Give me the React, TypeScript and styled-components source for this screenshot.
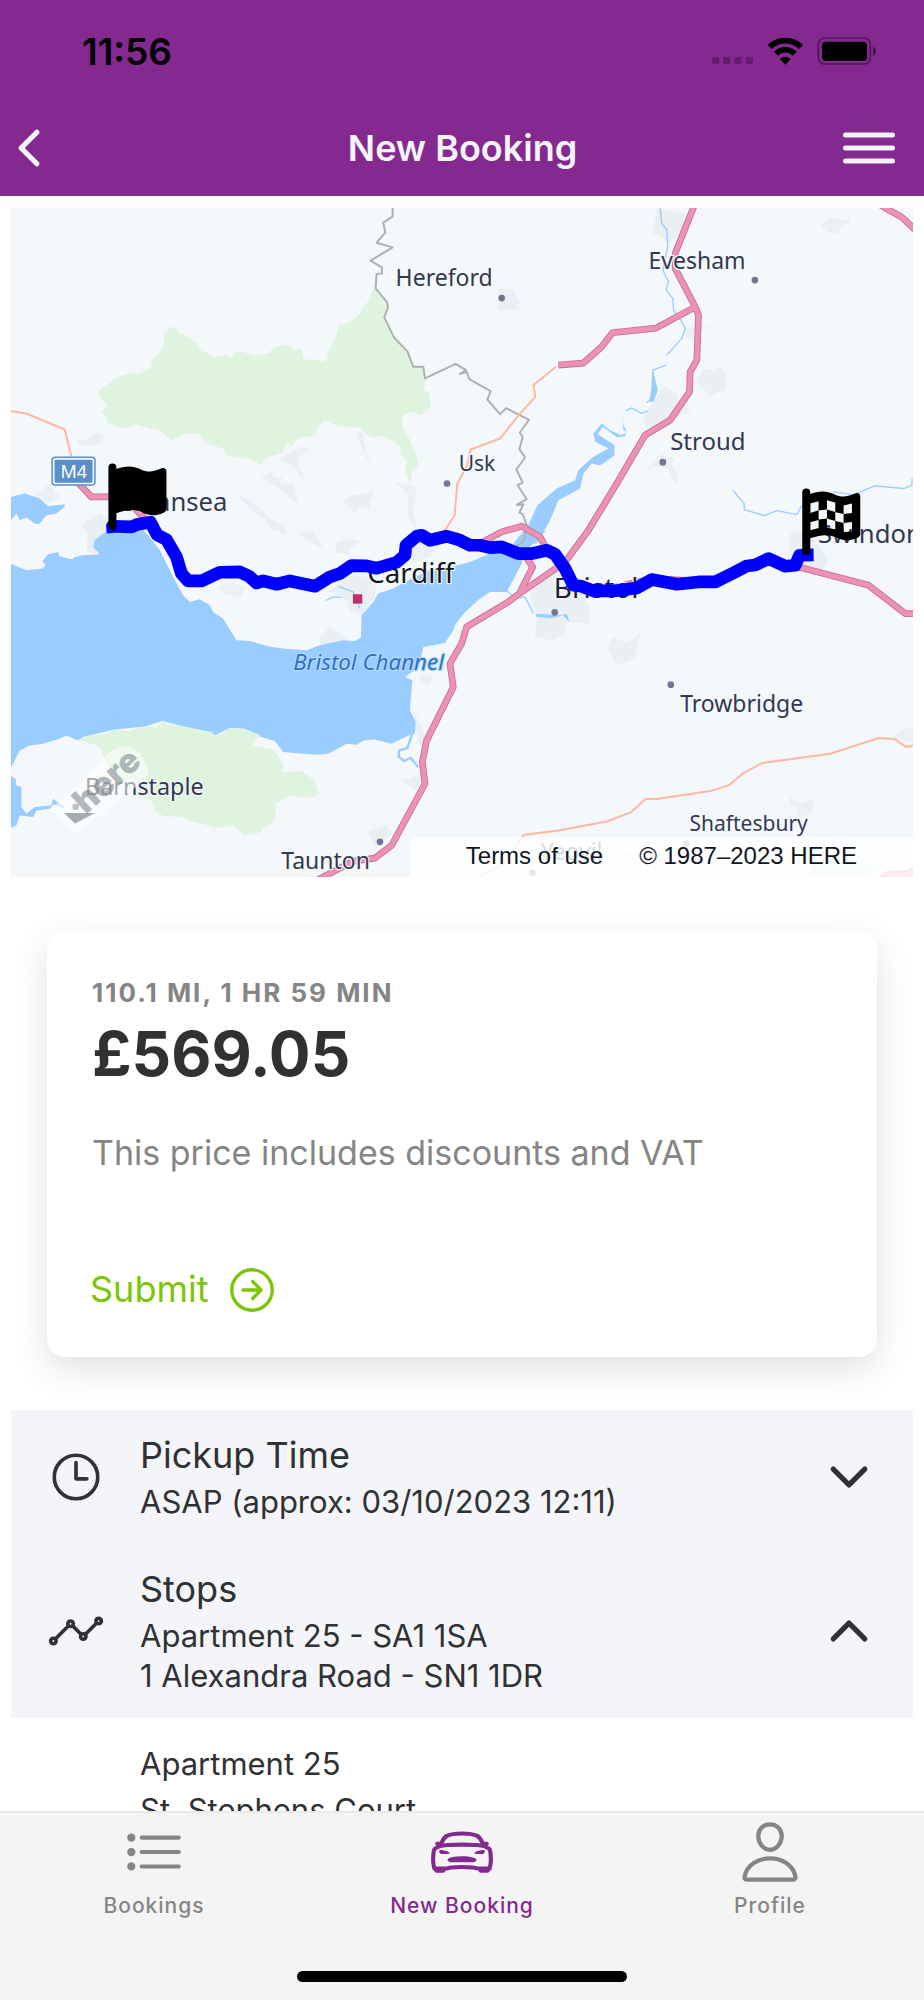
import React, { useState } from "react";
import styled, { createGlobalStyle } from "styled-components";
import {
  IoAnalyticsOutline,
  IoArrowForwardCircleOutline,
  IoCarSportOutline,
  IoChevronBack,
  IoChevronDown,
  IoChevronUp,
  IoListOutline,
  IoPersonOutline,
  IoTimeOutline,
} from "react-icons/io5";

const purple = "#83298f";
const ink = "#2f3133";
const grey = "#858585";

const GlobalStyle = createGlobalStyle`
  *, *::before, *::after { box-sizing: border-box; }
  body {
    margin: 0;
    background: #fff;
    color: ${ink};
    font-family: Inter, "Liberation Sans", sans-serif;
  }
  button { font: inherit; color: inherit; background: none; border: 0; padding: 0; cursor: pointer; }
  h1, h2, p { margin: 0; }
  svg { display: block; flex: none; }
`;

const Shell = styled.div`
  height: 100vh;
  display: flex;
  flex-direction: column;
`;

const Header = styled.header`
  flex: none;
  background: ${purple};
`;

const StatusBar = styled.div`
  display: flex;
  align-items: center;
  justify-content: space-between;
  height: 100px;
  padding: 2px 48px 0 82px;
  color: #000;
  font-size: 37px;
  font-weight: 600;
`;

const NavBar = styled.div`
  display: grid;
  grid-template-columns: 1fr auto 1fr;
  align-items: center;
  height: 96px;
  padding: 0 20px 0 1px;
  color: #f4f5fa;
`;

const Title = styled.h1`
  padding-left: 20px;
  font-size: 36px;
  font-weight: 600;
  line-height: 48px;
`;

const IconButton = styled.button<{ $end?: boolean }>`
  justify-self: ${(p) => (p.$end ? "end" : "start")};
`;

const Main = styled.main`
  flex: 1;
  min-height: 0;
  overflow-y: auto;
  scrollbar-width: none;
  padding: 12px 11px 0;
`;

const MapFrame = styled.section`
  position: relative;
  overflow: hidden;
`;

const MapDrawing = styled.svg`
  width: 100%;
  height: auto;
  font-family: "Noto Sans", sans-serif;
`;

const Attribution = styled.div`
  position: absolute;
  right: 0;
  bottom: 0;
  display: flex;
  align-items: center;
  gap: 36px;
  height: 40px;
  padding: 0 56px 2px;
  background: rgba(255, 255, 255, 0.82);
  color: #111522;
  font-family: "Liberation Sans", Arial, sans-serif;
  font-size: 24px;
  line-height: 32px;
  a { color: inherit; text-decoration: none; }
`;

const Card = styled.section`
  display: flex;
  flex-direction: column;
  align-items: flex-start;
  margin: 54px 36px 53px;
  padding: 44px 45px 40px;
  border-radius: 18px;
  background: #fff;
  box-shadow: 0 12px 36px rgba(0, 0, 0, 0.12);
`;

const Distance = styled.p`
  color: ${grey};
  font-size: 26px;
  font-weight: 700;
  letter-spacing: 2px;
  line-height: 36px;
  text-transform: uppercase;
`;

const Price = styled.h2`
  font-size: 62px;
  font-weight: 700;
  line-height: 86px;
`;

const PriceNote = styled.p`
  margin-top: 34px;
  color: ${grey};
  font-size: 34px;
  line-height: 44px;
`;

const Submit = styled.button`
  display: flex;
  align-items: center;
  gap: 17px;
  margin-top: 87px;
  margin-left: -2px;
  color: #7cc60a;
  font-size: 36px;
  line-height: 55px;
`;

const Row = styled.button`
  display: grid;
  grid-template-columns: 58px 1fr 56px;
  align-items: center;
  column-gap: 35px;
  width: 100%;
  padding: 22px 36px;
  background: #f4f5f9;
  color: ${ink};
  text-align: left;
`;

const RowTitle = styled.span`
  display: block;
  margin-bottom: 4px;
  font-size: 36px;
  line-height: 46px;
`;

const RowLine = styled.span`
  display: block;
  font-size: 31px;
  line-height: 40px;
`;

const RowText = styled.span`
  display: block;
`;

const StopDetails = styled.address`
  padding: 23px 0 0 129px;
  font-size: 31px;
  font-style: normal;
  line-height: 46px;
`;

const TabBar = styled.nav`
  flex: none;
  display: flex;
  flex-direction: column;
  align-items: center;
  justify-content: space-between;
  height: 189px;
  padding-bottom: 18px;
  border-top: 2px solid #e9e9e9;
  background: #f4f4f4;
`;

const Tabs = styled.div`
  display: grid;
  grid-template-columns: repeat(3, 1fr);
  width: 100%;
`;

const Tab = styled.a<{ $active?: boolean }>`
  display: flex;
  flex-direction: column;
  align-items: center;
  color: ${(p) => (p.$active ? purple : grey)};
  font-size: 21px;
  font-weight: 500;
  letter-spacing: 1px;
  line-height: 30px;
  text-decoration: none;
`;

const TabIcon = styled.span`
  display: grid;
  place-items: center;
  height: 78px;
`;

const HomeIndicator = styled.div`
  width: 330px;
  height: 11px;
  border-radius: 6px;
  background: #000;
`;

const StatusIcons = () => (
  <svg width="164" height="28" viewBox="36 48 492 84" aria-hidden="true">
    <g fill="#000" fillOpacity=".25">
      {[36, 69, 103, 137].map((x) => (
        <rect key={x} x={x} y="108" width="22" height="22" rx="6" />
      ))}
    </g>
    <g fill="none" stroke="#000" strokeWidth="17">
      <path d="M209 78 A67 67 0 0 1 303 78" />
      <path d="M228 98 A39 39 0 0 1 284 98" />
    </g>
    <path d="M240 114 Q256 100 272 114 L256 131Z" />
    <rect x="355" y="51" width="156" height="78" rx="20" fill="none" stroke="#000" strokeOpacity=".4" strokeWidth="5" />
    <rect x="366" y="62" width="135" height="58" rx="11" />
    <path d="M519 77 C531 81 531 101 519 105Z" fillOpacity=".45" />
  </svg>
);

const MenuIcon = () => (
  <svg width="70" height="70" viewBox="0 0 70 70" fill="none" stroke="currentColor" strokeWidth="5" strokeLinecap="round" aria-hidden="true">
    <path d="M11.500 22H58.500M11.500 35H58.500M11.500 48H58.500" />
  </svg>
);

const flagPole = "M66 67 a12 12 0 0 1 24 0 V243 a12 12 0 0 1 -24 0Z";
const flagCloth =
  "M88 72 C120 60 142 62 168 75 C192 84 206 76 226 69 Q240 67 240 80 V192 Q239 200 228 204 C206 213 188 212 168 202 C142 190 118 194 88 205Z";
const flagChecks =
  "M90 100 115 93V120L90 128Z M140 90 165 97V125L140 118Z M190 106 215 100V128L190 131Z M115 121 140 118V145L115 148Z M165 126 190 131V158L165 152Z M90 156 115 149V173L90 180Z M140 145 165 152V178L140 172Z M190 158 215 155V183L190 186Z";

const urban = [
  "M230 1320 260 1318 290 1295 318 1306 300 1332 240 1336Z",
  "M100 1488 155 1448 165 1470 180 1490 150 1508 110 1500Z",
  "M245 1575 300 1540 330 1560 330 1600 285 1630 290 1660 260 1655 265 1600Z",
  "M838 1372 905 1338 928 1350 895 1372 893 1390 915 1440 870 1390 845 1388Z",
  "M782 1430 815 1415 822 1432 852 1432 835 1445 855 1455 880 1450 897 1515 850 1475 830 1460Z",
  "M705 1478 750 1500 780 1525 815 1560 850 1575 865 1600 815 1590 800 1560 770 1545Z",
  "M1068 1300 1080 1290 1090 1305 1098 1360 1130 1422 1095 1365Z",
  "M1025 1500 1060 1485 1125 1478 1108 1505 1115 1530 1085 1518 1065 1540Z",
  "M1185 1445 1215 1455 1250 1460 1240 1520 1250 1590 1222 1545 1225 1485Z",
  "M895 1595 940 1592 970 1645 920 1622Z",
  "M1005 1630 1050 1615 1085 1625 1045 1645 1052 1662 1010 1658Z",
  "M655 1760 700 1745 740 1765 720 1790 670 1780Z",
  "M985 1770 1060 1725 1130 1735 1125 1790 1085 1840 1050 1835 1040 1800Z",
  "M955 1915 990 1880 1045 1915 1000 1940 970 1945Z",
  "M1240 1610 1330 1620 1290 1670 1230 1690Z",
  "M1262 2020 1300 2030 1285 2055 1262 2045Z",
  "M1240 2130 1265 2180 1280 2220 1262 2240 1245 2190Z",
  "M1098 2495 1160 2475 1175 2500 1130 2545Z",
  "M1210 2340 1270 2320 1250 2370Z",
  "M1975 625 2055 640 2045 700 2005 730 1980 705 1955 700Z",
  "M1490 866 1540 866 1550 890 1565 910 1540 912 1565 925 1500 932 1485 920 1505 905Z",
  "M2460 675 2490 655 2550 665 2520 680 2515 700 2480 695ZM2535 665 2550 650 2543 672Z",
  "M2055 985 2080 980 2130 980 2095 995 2080 1020 2060 1015Z",
  "M2085 1145 2110 1105 2140 1110 2155 1100 2180 1120 2175 1165 2130 1187Z",
  "M1930 1250 1990 1160 2025 1175 2040 1215 2070 1225 2060 1240 1990 1265 1940 1285Z",
  "M1935 1410 1965 1385 1985 1360 2000 1375 2025 1372 2015 1395 2030 1420 2035 1450 2020 1440 2005 1405 1960 1398 1950 1412Z",
  "M2370 1600 2420 1590 2485 1680 2460 1720 2370 1665Z",
  "M1590 1775 1680 1700 1740 1760 1770 1830 1765 1870 1700 1865 1690 1905 1655 1920 1605 1910 1610 1850Z",
  "M1820 1945 1835 1910 1875 1925 1900 1915 1920 1900 1905 1975 1850 1995Z",
  "M2370 2390 2400 2410 2440 2395 2435 2440 2390 2450 2395 2420 2368 2415Z",
  "M2670 2215 2720 2180 2740 2190 2740 2225Z",
];

const motorways = [
  "M2085 610 2025 760V805L2085 920 2095 945 2090 1080 2070 1115 2068 1175 2010 1260 1935 1305 1850 1450 1765 1590 1695 1685 1565 1775 1525 1805 1400 1880 1385 1930 1350 1990 1360 2060 1280 2220 1267 2285 1275 2350 1175 2535 1125 2573 1060 2582 950 2640",
  "M1675 1095 1750 1089 1805 1040 1837 998 1967 984 2090 918",
  "M1430 1635 1505 1595 1565 1578 1620 1610 1645 1655",
  "M1570 1660 1598 1700 1560 1775",
  "M1780 1775 1960 1735 2140 1745M2350 1688 2490 1725 2605 1755 2715 1840H2750",
  "M2640 615 2705 652 2750 695",
  "M2630 2650 2660 2622 2725 2618 2750 2608",
  "M200 1410 275 1490H340L400 1520 450 1570",
];

const trunks = [
  "M30 1232 80 1240 195 1288 215 1370",
  "M1668 1100 1600 1155 1606 1190 1560 1240 1500 1315 1412 1348 1400 1400 1372 1450 1364 1545 1332 1595",
  "M1425 2635 1510 2590 1572 2503 1670 2491 1820 2463 1893 2435 1937 2396H1970L2130 2372 2185 2355 2230 2318 2285 2288 2490 2260 2635 2213 2683 2216 2718 2240 2750 2232",
];

const dots = [
  [1505, 894], [2264, 840], [1988, 1386], [1341, 1450], [1664, 1836],
  [2012, 2053], [1140, 2524], [2059, 2530], [1597, 2617], [228, 2419],
];

const labels = [
  { name: "Hereford", x: 1187, y: 858, size: 69 },
  { name: "Evesham", x: 1945, y: 807, size: 69 },
  { name: "Usk", x: 1376, y: 1412, size: 63 },
  { name: "Stroud", x: 2010, y: 1348, size: 72 },
  { name: "Swansea", x: 366, y: 1532, size: 77 },
  { name: "Swindon", x: 2453, y: 1628, size: 77 },
  { name: "Trowbridge", x: 2040, y: 2135, size: 69 },
  { name: "Barnstaple", x: 256, y: 2385, size: 70 },
  { name: "Taunton", x: 844, y: 2607, size: 69 },
  { name: "Shaftesbury", x: 2068, y: 2493, size: 63 },
  { name: "Yeovil", x: 1622, y: 2580, size: 69 },
];

const RouteMap = () => (
  <MapDrawing viewBox="34 624 2704 2007" role="img" aria-label="Route from Swansea to Swindon">
    <rect x="0" y="600" width="2800" height="2100" fill="#f4f8fb" />
    <g fill="#e9eff2">
      {urban.map((d) => <path key={d} d={d} />)}
    </g>
    <g fill="#99ccff">
      <path d="M30 1690 80 1710 130 1705 138 1695 128 1683 145 1662 175 1655 180 1668 218 1678 225 1670 250 1665 300 1662 280 1640 285 1620 310 1600 340 1585 430 1590 445 1605 480 1650 520 1730 550 1785 570 1805 600 1797 630 1815 640 1835 670 1855 710 1920 750 1922 815 1940 855 1945 920 1950 960 1935 1030 1920 1065 1922 1083 1912 1085 1845 1120 1805 1135 1780 1180 1765 1225 1740 1290 1710 1350 1700 1410 1685 1470 1660 1530 1640 1570 1610 1640 1590 1570 1660 1565 1690 1520 1775 1470 1775 1440 1795 1390 1840 1365 1875 1360 1890 1335 1928 1270 1940 1258 2000 1215 2030 1237 2040 1230 2130 1247 2165 1245 2200 1225 2205 1175 2230 1125 2217 1090 2220 1070 2233 1040 2230 985 2260 950 2263 850 2255 825 2222 780 2208 735 2185 690 2183 645 2205 545 2177 488 2162 435 2178 340 2188 250 2210 235 2220 200 2205 170 2218 130 2230 90 2235 60 2250 30 2310Z" />
      <path d="M1540 1630 1585 1575 1612 1515 1670 1465 1725 1440 1735 1410 1780 1370 1825 1345 1785 1325 1780 1300 1805 1270 1830 1290 1862 1305 1878 1298 1875 1308 1850 1311 1808 1280 1793 1302 1843 1335 1843 1366 1800 1396 1775 1390 1750 1420 1740 1465 1675 1500 1650 1560 1610 1630Z" />
      <path d="M34 1490 75 1480 120 1495 145 1518 195 1512 195 1520 170 1540 140 1545 118 1572 105 1570 80 1552 60 1560 50 1540 34 1560Z" />
      <path d="M30 2325 48 2335 50 2355 65 2360V2420L80 2440 105 2420 155 2415 160 2395 200 2425 160 2412 150 2425 110 2430 100 2450 60 2445 50 2475 30 2485Z" />
      <path d="M1958 1108 1973 1170 1960 1205 1946 1204 1956 1160ZM1868 1260 1878 1230 1866 1264 1880 1295 1870 1290Z" />
      <path d="M1605 1840 1680 1845 1700 1840 1708 1865 1690 1845 1655 1853 1610 1850Z" />
    </g>
    <g fill="none" stroke="#99ccff" strokeWidth="4" strokeLinejoin="round">
      <path d="M1980 625 1985 670 2000 690 2003 740 1988 810 2005 845 1998 870 2018 895 2020 930 2045 965 2055 985 2045 1015 2000 1065M1998 1095 1958 1110 1955 1195 1940 1208M1943 1232 1925 1240 1895 1223 1876 1232" />
      <path d="M1520 1770 1545 1795 1575 1790 1600 1840" />
      <path d="M2198 1470 2232 1510V1528L2292 1546 2330 1531 2390 1543 2405 1515M2498 1474 2560 1484 2623 1457 2710 1465 2735 1455V1435" />
      <path d="M1015 1758 1060 1775 1080 1825M978 1800 1000 1790 1025 1792" />
    </g>
    <path
      fill="none"
      stroke="#99ccff"
      strokeWidth="7"
      strokeLinejoin="round"
      d="M1240 2190 1222 2243 1198 2250 1196 2268 1212 2282 1232 2272 1254 2300"
    />
    <g fill="#dff4df">
      <path d="M1118 868 1127 865 1162 908 1164 922 1153 952 1182 1012 1222 1053 1240 1100 1270 1102 1278 1140 1272 1172 1289 1174 1291 1220 1265 1245 1235 1235 1207 1248V1280L1225 1310 1248 1362 1257 1400 1238 1407 1230 1450 1215 1410 1222 1385 1200 1360 1203 1340 1185 1325 1145 1307 1122 1312 1100 1305 1080 1283 1015 1280 975 1260 950 1285 947 1305 895 1315 875 1335 862 1325 848 1358 800 1372 785 1395 745 1375 712 1372 680 1366 670 1346 615 1328 600 1302 560 1300 515 1322 480 1292 405 1272 385 1285 355 1280 323 1270 318 1250 305 1235 322 1215 292 1180 305 1165 355 1130 400 1118 420 1122 455 1100V1080L485 1052 492 1030V1000L515 980 525 982 540 1002 557 1005 590 1030 605 1050 640 1070 675 1065 695 1073 705 1057 720 1054 770 1066 808 1058 820 1043 855 1034 875 1040 878 1053 905 1047 912 1078 950 1078 970 1085 983 1075V1060L1008 1010 1018 973 1045 970 1082 940 1085 925 1105 903Z" />
      <path d="M243 2218 260 2207 325 2201 340 2188H375L385 2193 435 2177 470 2181 488 2161 505 2175 545 2177 635 2195 645 2205 670 2199 690 2183 735 2186 782 2204 760 2223V2235L820 2248 850 2290V2315L905 2312 945 2340 958 2380 935 2392 865 2387 827 2410V2450L815 2470 790 2480 785 2495 735 2507 700 2475 650 2483 575 2462 545 2450 490 2447 465 2430 455 2400 400 2380 330 2310 300 2240Z" />
      <path d="M2435 2585 2560 2575 2640 2605 2600 2640H2430Z" />
    </g>
    <g fill="none" strokeLinejoin="round">
      <path
        stroke="#b0b0b0"
        strokeWidth="6"
        d="M1178 610V650L1150 668 1156 698 1130 728 1178 742 1112 782 1146 803V820L1130 822 1127 865 1162 908 1164 922 1153 952 1182 1012 1222 1053 1240 1100H1270L1275 1135 1367 1091 1398 1110 1380 1122 1400 1115 1408 1137 1472 1173 1462 1198 1500 1242 1518 1224 1587 1259 1559 1297 1568 1310 1558 1347 1575 1372 1549 1408 1568 1447 1553 1455 1580 1497 1550 1514 1570 1512 1558 1537 1568 1542 1580 1575 1572 1620 1550 1640"
      />
      {trunks.map((d) => <path key={d} d={d} stroke="#ffb8a2" strokeWidth="6" />)}
      {motorways.map((d) => <path key={d} d={d} stroke="#ca6890" strokeWidth="20" />)}
      {motorways.map((d) => <path key={d} d={d} stroke="#ec93b5" strokeWidth="15" />)}
    </g>
    <g fill="#70788f">
      {dots.map(([x, y]) => <circle key={x} cx={x} cy={y} r="10" />)}
    </g>
    <rect x="1059" y="1782" width="28" height="28" fill="#c03068" />
    <g fill="#333850" stroke="#f4f8fb" strokeWidth="7" strokeLinejoin="round" paintOrder="stroke">
      {labels.map((l) => <text key={l.name} x={l.x} y={l.y} fontSize={l.size}>{l.name}</text>)}
      <text x="1102" y="1748" fontSize="83" fill="#15171c">Cardiff</text>
      <text x="1661" y="1793" fontSize="84" fill="#1d2033">Bristol</text>
      <text x="880" y="2010" fontSize="67" fontStyle="italic" fill="#2e70c6" stroke="#b5daff">Bristol Channel</text>
    </g>
    <rect x="155" y="1369" width="133" height="88" rx="12" fill="#5b8fca" />
    <rect x="162" y="1376" width="119" height="74" rx="6" fill="none" stroke="#f4f8fb" strokeWidth="5" />
    <text x="222" y="1433" fontSize="54" fill="#fff" textAnchor="middle">M4</text>
    <path
      fill="none"
      stroke="#00f"
      strokeWidth="38"
      strokeLinejoin="round"
      d="M340 1598 338 1578 395 1580 415 1572 452 1566 472 1604 500 1618 530 1670 545 1720 565 1742H605L660 1716 720 1715 748 1728 770 1748 790 1742 830 1752 870 1742 945 1758 990 1730 1020 1720 1055 1696 1100 1697 1130 1704 1190 1686 1215 1665 1218 1635 1250 1608 1265 1605 1290 1620 1340 1608 1375 1618 1410 1635H1440L1470 1642 1505 1640 1555 1660H1595L1640 1650 1665 1662 1695 1705 1720 1755 1745 1758 1780 1772H1840L1910 1763 1955 1738 2030 1752 2095 1745H2145L2200 1718 2240 1697 2265 1694 2305 1675 2355 1698 2385 1695 2398 1665 2440 1664"
    />
    <path d={flagPole + flagCloth} transform="translate(260 1335)" />
    <g transform="translate(2340 1410)">
      <path d={flagPole} />
      <path d={flagCloth + flagChecks} fillRule="evenodd" />
    </g>
    <g>
      <path
        fill="#fff"
        fillOpacity=".55"
        d="M226 2496 152 2424 200 2385 330 2255 Q375 2225 415 2255 Q455 2295 440 2335 L300 2445Z"
      />
      <path d="M193 2438H286L226 2469Z" fill="#a5abb0" />
      <text
        transform="translate(258 2444) rotate(-42)"
        fontFamily="Inter, sans-serif"
        fontWeight="900"
        fontSize="102"
        fill="#7f8a8e"
        fillOpacity=".6"
      >
        here
      </text>
    </g>
  </MapDrawing>
);

export default function App() {
  const [timeOpen, setTimeOpen] = useState(false);
  const [stopsOpen, setStopsOpen] = useState(true);

  return (
    <>
      <GlobalStyle />
      <Shell>
        <Header>
          <StatusBar>
            <span>11:56</span>
            <StatusIcons />
          </StatusBar>
          <NavBar>
            <IconButton aria-label="Back"><IoChevronBack size={56} /></IconButton>
            <Title>New Booking</Title>
            <IconButton $end aria-label="Menu"><MenuIcon /></IconButton>
          </NavBar>
        </Header>

        <Main>
          <MapFrame>
            <RouteMap />
            <Attribution>
              <a href="#terms">Terms of use</a>
              <span>© 1987–2023 HERE</span>
            </Attribution>
          </MapFrame>

          <Card>
            <Distance>110.1 mi, 1 hr 59 min</Distance>
            <Price>£569.05</Price>
            <PriceNote>This price includes discounts and VAT</PriceNote>
            <Submit>
              Submit
              <IoArrowForwardCircleOutline size={54} />
            </Submit>
          </Card>

          <Row aria-expanded={timeOpen} onClick={() => setTimeOpen(!timeOpen)}>
            <IoTimeOutline size={58} />
            <RowText>
              <RowTitle>Pickup Time</RowTitle>
              <RowLine>ASAP (approx: 03/10/2023 12:11)</RowLine>
            </RowText>
            {timeOpen ? <IoChevronUp size={56} /> : <IoChevronDown size={56} />}
          </Row>
          <Row aria-expanded={stopsOpen} onClick={() => setStopsOpen(!stopsOpen)}>
            <IoAnalyticsOutline size={58} />
            <RowText>
              <RowTitle>Stops</RowTitle>
              <RowLine>Apartment 25 - SA1 1SA</RowLine>
              <RowLine>1 Alexandra Road - SN1 1DR</RowLine>
            </RowText>
            {stopsOpen ? <IoChevronUp size={56} /> : <IoChevronDown size={56} />}
          </Row>
          {stopsOpen && (
            <StopDetails>
              Apartment 25
              <br />
              St. Stephens Court
            </StopDetails>
          )}
        </Main>

        <TabBar>
          <Tabs>
            <Tab href="#bookings">
              <TabIcon><IoListOutline size={66} /></TabIcon>
              Bookings
            </Tab>
            <Tab href="#new-booking" $active aria-current="page">
              <TabIcon><IoCarSportOutline size={66} /></TabIcon>
              New Booking
            </Tab>
            <Tab href="#profile">
              <TabIcon><IoPersonOutline size={68} /></TabIcon>
              Profile
            </Tab>
          </Tabs>
          <HomeIndicator />
        </TabBar>
      </Shell>
    </>
  );
}
